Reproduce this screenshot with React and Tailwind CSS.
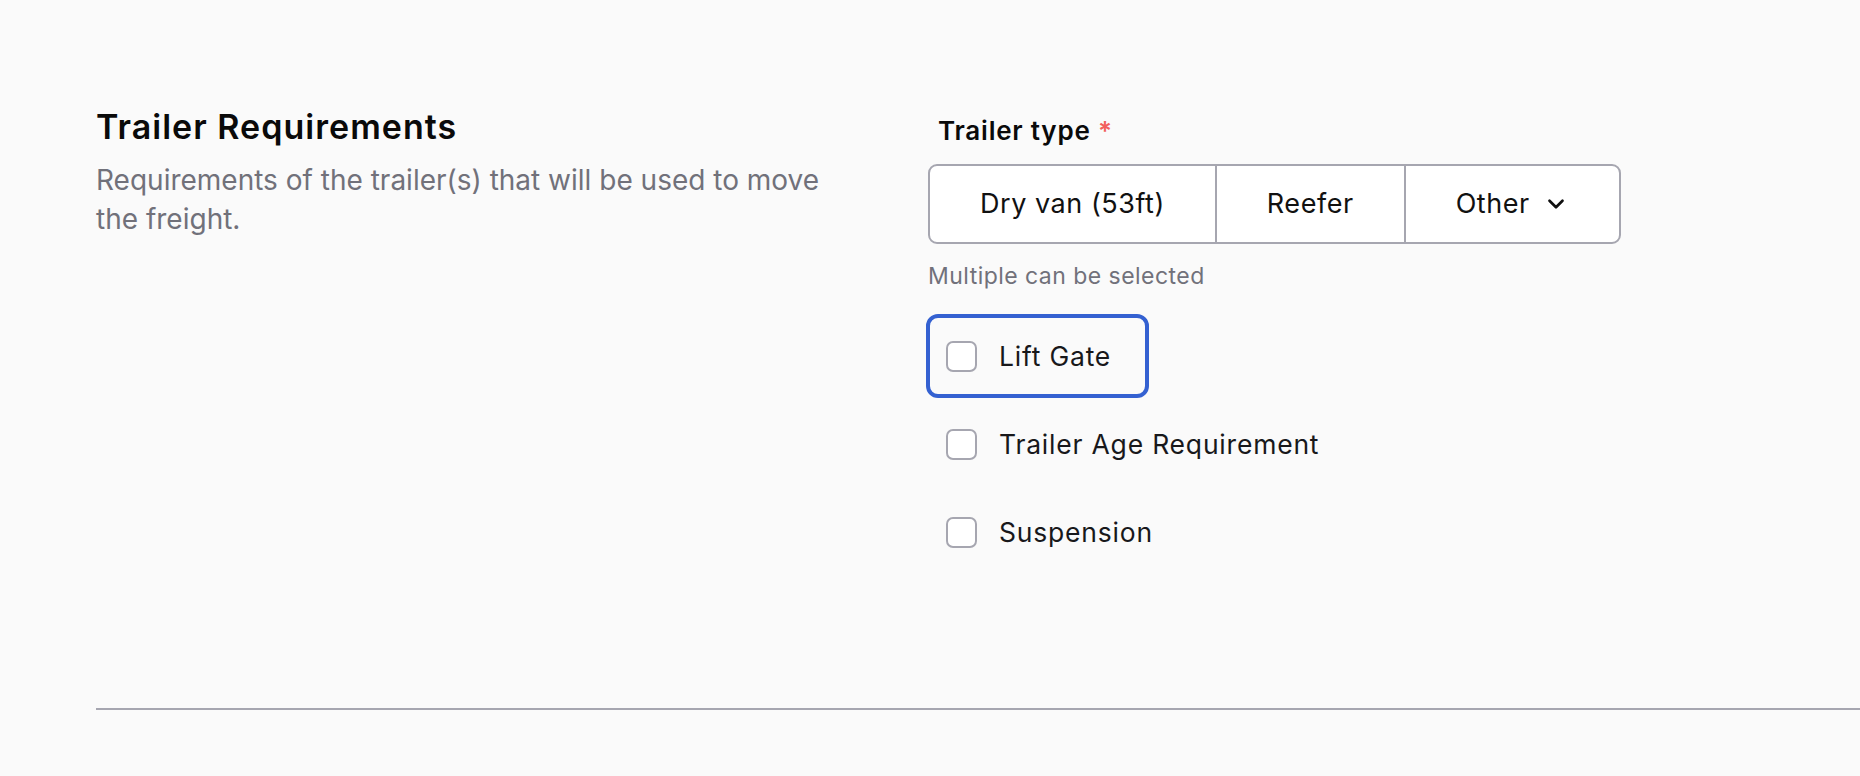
import React from 'react';
import { ChevronDown } from 'lucide-react';

const trailerTypes = [
  { label: 'Dry van (53ft)' },
  { label: 'Reefer' },
  { label: 'Other', menu: true },
];

const extras = [
  { label: 'Lift Gate', focused: true },
  { label: 'Trailer Age Requirement' },
  { label: 'Suspension' },
];

const CheckRow = ({ label, focused }) => (
  <label
    className={`flex h-[84px] w-fit items-center gap-[22px] rounded-[12px] border-4 pl-4 pr-[34px] ${
      focused ? 'border-[#3461d1]' : 'border-transparent'
    }`}
  >
    <span className="h-[31px] w-[31px] shrink-0 rounded-[7px] border-2 border-[#a6a6b0] bg-white" />
    <span className="text-[26.5px] leading-[32px] tracking-[0.03em] text-[#18181b]">{label}</span>
  </label>
);

export default function App() {
  return (
    <div className="min-h-screen bg-[#fafafa] font-['Inter','Noto_Sans',sans-serif]">
      <div className="flex pl-[96px] pt-[106px]">
        <div className="w-[832px] shrink-0">
          <h2 className="text-[34px] font-semibold leading-[42px] tracking-[0.03em] text-[#0a0a0a]">
            Trailer Requirements
          </h2>
          <p className="mt-[13px] w-[740px] text-[28px] leading-[39px] text-[#71717a]">
            Requirements of the trailer(s) that will be used to move the freight.
          </p>
        </div>

        <div className="pt-[9px]">
          <div className="pl-[10px] text-[26px] font-semibold leading-[32px] tracking-[0.03em] text-[#0a0a0a]">
            Trailer type <span className="text-[#f25f5c]">*</span>
          </div>

          <div className="mt-[17px] flex h-[80px] w-fit overflow-hidden rounded-[9px] border-2 border-[#a6a6b0] bg-white">
            {trailerTypes.map((t, i) => (
              <button
                key={t.label}
                className={`flex items-center px-[50px] text-[27px] tracking-[0.02em] text-[#111] ${
                  i > 0 ? 'border-l-2 border-[#a6a6b0]' : ''
                }`}
              >
                {t.label}
                {t.menu && <ChevronDown size={26} strokeWidth={2.5} className="ml-[13px]" />}
              </button>
            ))}
          </div>

          <p className="mt-[18px] text-[23px] leading-[28px] tracking-[0.02em] text-[#71717a]">
            Multiple can be selected
          </p>

          <div className="mt-[24px] -ml-[2px] flex flex-col gap-1">
            {extras.map((e) => (
              <CheckRow key={e.label} {...e} />
            ))}
          </div>
        </div>
      </div>

      <div className="ml-[96px] mt-[134px] h-[2px] bg-[#a6a6b0]" />
    </div>
  );
}
